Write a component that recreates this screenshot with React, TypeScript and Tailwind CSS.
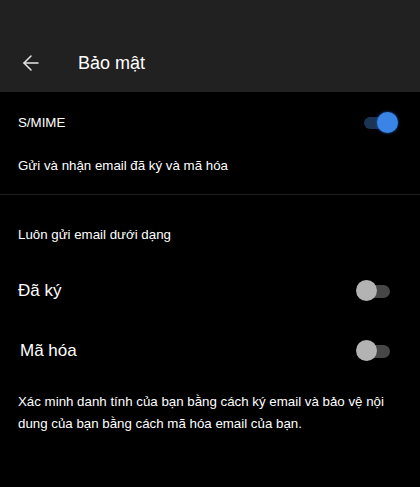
import { ArrowLeft } from "lucide-react";

const Toggle = ({ on }: { on: boolean }) => {
  if (on) {
    return (
      <div className="relative w-[34px] h-[22px] flex items-center">
        <div className="w-[30px] h-[12px] rounded-full bg-[#1b3453]" />
        <div className="absolute right-0 top-0 w-[21px] h-[21px] rounded-full bg-[#3a84e6] shadow-[0_0_3px_#1f5fc0]" />
      </div>
    );
  }
  return (
    <div className="relative w-[34px] h-[22px] flex items-center justify-end">
      <div className="w-[30px] h-[13px] rounded-full bg-[#474747]" />
      <div className="absolute left-0 top-0 w-[21px] h-[21px] rounded-full bg-[#b3b3b3]" />
    </div>
  );
};

export default function App() {
  return (
    <div
      className="w-[420px] h-[487px] bg-black text-white overflow-hidden"
      style={{ fontFamily: '"Liberation Sans", Arial, sans-serif' }}
    >
      <header className="h-[92px] bg-[#212121] flex items-end pb-[17px]">
        <div className="flex items-center h-[24px]">
          <ArrowLeft className="ml-[19px] w-[24px] h-[24px] text-[#e6e6e6]" strokeWidth={1.5} />
          <h1 className="ml-[35px] text-[18px] leading-none">Bảo mật</h1>
        </div>
      </header>

      <section className="border-b border-[#1c1c1c]">
        <div className="flex items-center justify-between pl-[18px] pr-[22px] pt-[20px] h-[42px]">
          <span className="text-[13.3px]">S/MIME</span>
          <Toggle on />
        </div>
        <p className="pl-[18px] text-[13.3px] pt-[24px] pb-[20px] leading-[16px]">Gửi và nhận email đã ký và mã hóa</p>
      </section>

      <section>
        <p className="pl-[18px] text-[13.3px] pt-[32px] leading-[16px]">Luôn gửi email dưới dạng</p>
        <div className="flex items-center justify-between pl-[18px] pr-[30px] mt-[37px] h-[22px]">
          <span className="text-[17px]">Đã ký</span>
          <Toggle on={false} />
        </div>
        <div className="flex items-center justify-between pl-[20px] pr-[30px] mt-[38px] h-[22px]">
          <span className="text-[17px]">Mã hóa</span>
          <Toggle on={false} />
        </div>
        <p className="pl-[18px] pr-[12px] text-[13.3px] leading-[22px] mt-[29px]">
          Xác minh danh tính của bạn bằng cách ký email và bảo vệ nội dung của bạn bằng cách mã hóa email của bạn.
        </p>
      </section>
    </div>
  );
}
